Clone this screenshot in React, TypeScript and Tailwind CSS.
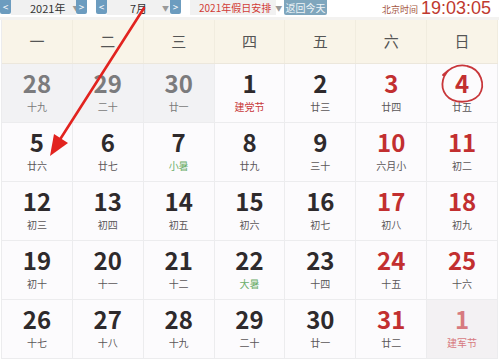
import React from 'react';

type Day = { d: number; l: string; kind?: 'prev' | 'next'; red?: boolean; fest?: 'red' | 'green' };

const weeks: Day[][] = [
  [
    { d: 28, l: '十九', kind: 'prev' },
    { d: 29, l: '二十', kind: 'prev' },
    { d: 30, l: '廿一', kind: 'prev' },
    { d: 1, l: '建党节', fest: 'red' },
    { d: 2, l: '廿三' },
    { d: 3, l: '廿四', red: true },
    { d: 4, l: '廿五', red: true },
  ],
  [
    { d: 5, l: '廿六' },
    { d: 6, l: '廿七' },
    { d: 7, l: '小暑', fest: 'green' },
    { d: 8, l: '廿九' },
    { d: 9, l: '三十' },
    { d: 10, l: '六月小', red: true },
    { d: 11, l: '初二', red: true },
  ],
  [
    { d: 12, l: '初三' },
    { d: 13, l: '初四' },
    { d: 14, l: '初五' },
    { d: 15, l: '初六' },
    { d: 16, l: '初七' },
    { d: 17, l: '初八', red: true },
    { d: 18, l: '初九', red: true },
  ],
  [
    { d: 19, l: '初十' },
    { d: 20, l: '十一' },
    { d: 21, l: '十二' },
    { d: 22, l: '大暑', fest: 'green' },
    { d: 23, l: '十四' },
    { d: 24, l: '十五', red: true },
    { d: 25, l: '十六', red: true },
  ],
  [
    { d: 26, l: '十七' },
    { d: 27, l: '十八' },
    { d: 28, l: '十九' },
    { d: 29, l: '二十' },
    { d: 30, l: '廿一' },
    { d: 31, l: '廿二', red: true },
    { d: 1, l: '建军节', kind: 'next' },
  ],
];

const weekdays = ['一', '二', '三', '四', '五', '六', '日'];

function NavBtn({ dir }: { dir: '<' | '>' }) {
  return (
    <div className="w-[11px] h-[14px] shrink-0 bg-[#6c9cbf] text-white text-[10px] leading-[14px] text-center rounded-b-[2px]">
      {dir}
    </div>
  );
}

function Cell({ day }: { day: Day }) {
  let bg = 'bg-[#fcfbfd]';
  let num = 'text-[#2e2a2c]';
  let lunar = 'text-[#5a5658]';
  if (day.kind === 'prev') {
    bg = 'bg-[#f2f2f4]';
    num = 'text-[#7b7b7d]';
    lunar = 'text-[#7a7a7a]';
  } else if (day.kind === 'next') {
    bg = 'bg-[#f3f1f3]';
    num = 'text-[#d77a7f]';
    lunar = 'text-[#d77a7f]';
  } else if (day.red) {
    num = 'text-[#c22f30]';
  }
  if (day.fest === 'red') lunar = 'text-[#c8393a]';
  if (day.fest === 'green') lunar = 'text-[#6cae6a]';
  return (
    <div className={`h-[59px] border-r border-b border-[#ececee] flex flex-col items-center pt-[6px] ${bg}`}>
      <span className={`text-[24px] leading-[26px] font-bold ${num}`}>{day.d}</span>
      <span className={`text-[10px] leading-[12px] mt-[5px] ${lunar}`}>{day.l}</span>
    </div>
  );
}

export default function App() {
  return (
    <div
      className="relative w-[499px] h-[362px] overflow-hidden bg-white"
      style={{ fontFamily: '"Noto Sans CJK SC", "Noto Sans", sans-serif' }}
    >
      {/* top toolbar */}
      <div className="h-[17px] flex items-start text-[11px] leading-[14px] whitespace-nowrap">
        <NavBtn dir="<" />
        <div className="w-[65px] h-[15px] shrink-0 bg-[#f1f1f1] flex items-center">
          <span className="ml-[19px] text-[#333]">2021年</span>
          <span className="ml-[7px] text-[7px] text-[#999]">▼</span>
        </div>
        <NavBtn dir=">" />
        <div className="w-[9px] shrink-0" />
        <NavBtn dir="<" />
        <div className="w-[63px] h-[15px] shrink-0 bg-[#f1f1f1] flex items-center">
          <span className="ml-[23px] text-[#333]">7月</span>
          <span className="ml-[15px] text-[7px] text-[#999]">▼</span>
        </div>
        <NavBtn dir=">" />
        <div className="w-[9px] shrink-0" />
        <div className="w-[86px] h-[15px] shrink-0 bg-[#f1f1f1] flex items-center">
          <span className="ml-[9px] text-[10px] text-[#d23b36]">2021年假日安排</span>
          <span className="ml-[4px] text-[7px] text-[#999]">▼</span>
        </div>
        <div className="w-[8px] shrink-0" />
        <div className="w-[43px] h-[15px] shrink-0 bg-[#7fa6bd] text-[#eef4f8] text-[10px] leading-[15px] text-center rounded-b-[2px]">
          返回今天
        </div>
        <div className="flex-1 flex items-end justify-end pr-[8px] h-[17px]">
          <span className="text-[9px] leading-[12px] text-[#a4553e] mr-[3px] mb-[1px]">北京时间</span>
          <span className="text-[18px] leading-[17px] text-[#c0392f]" style={{ fontFamily: '"Liberation Sans", Arial, sans-serif' }}>
            19:03:05
          </span>
        </div>
      </div>
      <div className="h-[3px] bg-[#f3f2f0]" />

      {/* calendar */}
      <div className="mx-[1px] border-l border-[#ececee]">
        <div className="grid grid-cols-7 h-[44px] bg-[#f9f4e8] border-b border-[#ece7dc]">
          {weekdays.map((w) => (
            <div key={w} className="flex items-center justify-center text-[15px] text-[#555] border-r border-[#f1ecdf]">
              {w}
            </div>
          ))}
        </div>
        {weeks.map((week, i) => (
          <div key={i} className="grid grid-cols-7">
            {week.map((day, j) => (
              <Cell key={j} day={day} />
            ))}
          </div>
        ))}
      </div>

      {/* annotations */}
      <svg className="absolute left-0 top-0 pointer-events-none" width="499" height="362">
        <line x1="144" y1="8" x2="59" y2="141" stroke="#e2231f" strokeWidth="2.6" strokeLinecap="round" />
        <polygon points="50,156 54,134 68,143" fill="#e2231f" />
        <path
          d="M 452 68 C 443 73, 439 86, 446 95 C 453 104, 471 104, 479 95 C 486 85, 481 69, 467 66 C 459 64, 450 68, 443 75"
          fill="none"
          stroke="#c8363a"
          strokeWidth="1.8"
          strokeLinecap="round"
        />
      </svg>
    </div>
  );
}
